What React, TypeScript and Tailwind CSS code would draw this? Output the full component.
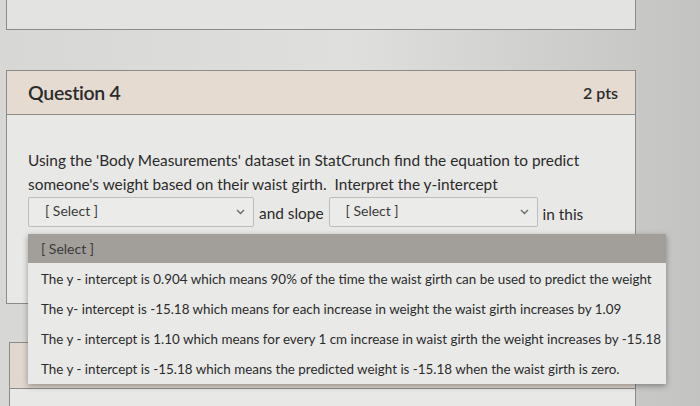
import React from "react";

function Chevron() {
  return (
    <svg width="9" height="6" viewBox="0 0 9 6" className="shrink-0">
      <polyline points="1,1 4.5,4.5 8,1" fill="none" stroke="#6b6b6b" strokeWidth="1.4" />
    </svg>
  );
}

function Select({ w }: { w: string }) {
  return (
    <div className={`flex h-[30px] ${w} items-start justify-between rounded-[2px] border border-[#bdbdbb] bg-[#ebebe9] pl-[16px] pr-[8px] pt-[4px]`}>
      <span className="text-[14px] leading-[18px] text-[#3b3b3b]">[ Select ]</span>
      <span className="mt-[7px]"><Chevron /></span>
    </div>
  );
}

const options = [
  "The y - intercept is 0.904 which means 90% of the time the waist girth can be used to predict the weight",
  "The y- intercept is -15.18 which means for each increase in weight the waist girth increases by 1.09",
  "The y - intercept is 1.10 which means for every 1 cm increase in waist girth the weight increases by -15.18",
  "The y - intercept is -15.18 which means the predicted weight is -15.18 when the waist girth is zero.",
];

export default function App() {
  return (
    <div className="relative h-[406px] w-[700px] overflow-hidden bg-gradient-to-r from-[#d7d7d5] via-[#dfdfdd] to-[#c3c3c2] font-['Lato','Noto_Sans',sans-serif] text-[#2b2b2b]">
      <div className="flex w-[636px] flex-col pl-[6px]">
        <div className="h-[30px] border-x border-b border-[#8c8b88] bg-[#e3e3e1]" />

        <div className="mt-[40px] border border-[#8c8b88] bg-[#e8e8e6]">
          <div className="flex h-[44px] items-center justify-between border-b border-[#8c8b88] bg-[#e5dbd1] pl-[21px] pr-[17px]">
            <span className="text-[19.5px] font-semibold tracking-[-0.3px]">Question 4</span>
            <span className="text-[16px] font-semibold">2 pts</span>
          </div>
          <div className="h-[188px] pl-[21px] pt-[33px]">
            <p className="text-[15.4px] leading-[24px]">
              Using the 'Body Measurements' dataset in StatCrunch find the equation to predict
              <br />
              someone's weight based on their waist girth.&nbsp; Interpret the y-intercept
            </p>
            <div className="mt-[1px] flex items-start gap-[5px] text-[15.4px]">
              <Select w="w-[226px]" />
              <span className="mt-[6px] leading-[20px]">and slope</span>
              <Select w="w-[209px]" />
              <span className="mt-[7px] leading-[20px]">in this</span>
            </div>
          </div>
        </div>

        <div className="ml-[3px] mt-[38px] border border-[#8c8b88] bg-[#e8e8e6]">
          <div className="h-[46px] border-b border-[#8c8b88] bg-[#e0d8cf]" />
          <div className="h-[40px]" />
        </div>
      </div>

      <div className="absolute left-[28px] top-[234px] w-[638px] shadow-[0_2px_6px_rgba(0,0,0,0.35)]">
        <div className="flex h-[29px] items-center bg-[#a29f9a] pl-[13px] text-[14px] text-[#3a3a3a]">[ Select ]</div>
        <div className="bg-[#e9e9e7] pt-[1px]">
          {options.map((o) => (
            <div key={o} className="flex h-[30px] items-center whitespace-nowrap pl-[13px] text-[13.4px] text-[#2b2b2b]">
              {o}
            </div>
          ))}
        </div>
      </div>
    </div>
  );
}
